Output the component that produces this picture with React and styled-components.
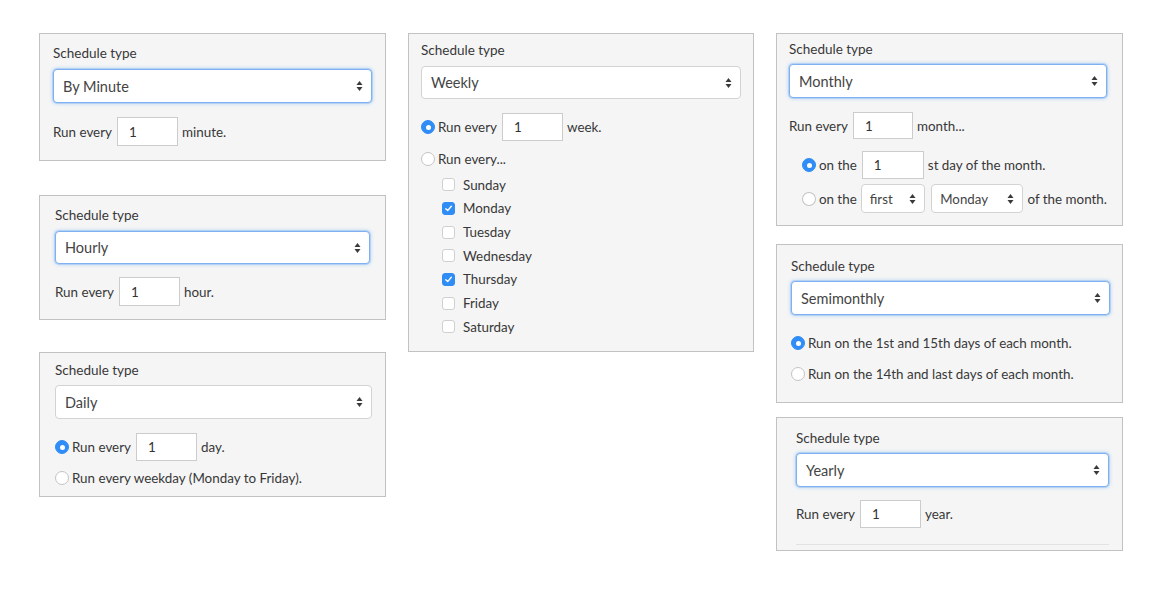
import styled, { createGlobalStyle } from "styled-components";

const GlobalStyle = createGlobalStyle`
  body {
    margin: 0;
    background: #ffffff;
    font-family: Lato, "Open Sans", sans-serif;
    color: #383838;
  }
`;

const Page = styled.div`
  display: flex;
  align-items: flex-start;
  gap: 22px;
  padding: 33px 0 0 39px;
`;

const Column = styled.div`
  display: flex;
  flex-direction: column;
  width: ${(p) => p.$w || 347}px;
`;

const Panel = styled.div`
  background: #f5f5f5;
  border: 1px solid #c2c2c2;
  margin-top: ${(p) => p.$mt || 0}px;
  padding: ${(p) => `${p.$pt}px ${p.$pr}px ${p.$pb}px ${p.$pl}px`};
`;

const Label = styled.div`
  font-size: 13.5px;
  line-height: 16px;
  color: #383838;
  margin-bottom: ${(p) => p.$mb}px;
`;

const SelectBox = styled.div`
  box-sizing: border-box;
  display: flex;
  align-items: center;
  justify-content: space-between;
  height: ${(p) => p.$h || 34}px;
  width: ${(p) => (p.$w ? `${p.$w}px` : "auto")};
  padding: 0 8px 0 ${(p) => (p.$small ? 8 : 9)}px;
  background: #fff;
  border: 1px solid ${(p) => (p.$focus ? "#7fb0ef" : "#d3d3d3")};
  border-radius: 4px;
  box-shadow: ${(p) =>
    p.$focus ? "0 0 0 1px rgba(127,176,239,0.35), 0 0 4px rgba(59,153,252,0.45)" : "none"};
  font-size: ${(p) => (p.$small ? 13.3 : 14.5)}px;
  color: #444;
  margin: ${(p) => p.$margin || 0};
`;

const Row = styled.div`
  display: flex;
  align-items: center;
  height: ${(p) => p.$h}px;
  margin-top: ${(p) => p.$mt}px;
  padding-left: ${(p) => p.$indent || 0}px;
  font-size: 13.4px;
  color: #383838;
  white-space: nowrap;
`;

const NumberBox = styled.div`
  box-sizing: border-box;
  display: flex;
  align-items: center;
  width: ${(p) => p.$w || 61}px;
  height: 100%;
  padding-left: 11px;
  margin: 0 4px 0 5px;
  background: #fff;
  border: 1px solid #cccccc;
  font-size: 13.4px;
  color: #333;
`;

const Radio = styled.span`
  box-sizing: border-box;
  display: inline-flex;
  align-items: center;
  justify-content: center;
  width: 14px;
  height: 14px;
  margin-right: 3px;
  border-radius: 50%;
  background: ${(p) => (p.$on ? "#2f8df5" : "#fff")};
  border: 1px solid ${(p) => (p.$on ? "#2f8df5" : "#c4c4c4")};

  &::after {
    content: "";
    display: ${(p) => (p.$on ? "block" : "none")};
    width: 5px;
    height: 5px;
    border-radius: 50%;
    background: #fff;
  }
`;

const DayList = styled.div`
  margin-top: 4px;
  padding-left: 21px;
`;

const DayRow = styled.div`
  display: flex;
  align-items: center;
  height: 23.67px;
  font-size: 13.4px;
  color: #383838;
`;

const Check = styled.span`
  box-sizing: border-box;
  display: inline-flex;
  align-items: center;
  justify-content: center;
  width: 13px;
  height: 13px;
  margin-right: 8px;
  border-radius: 3px;
  background: ${(p) => (p.$on ? "#2f8df5" : "#fff")};
  border: 1px solid ${(p) => (p.$on ? "#2f8df5" : "#d0d0d0")};
`;

const Divider = styled.div`
  height: 1px;
  margin-top: 16px;
  background: #e2e2e2;
`;

const Arrows = () => (
  <svg width="7" height="12" viewBox="0 0 7 12">
    <path d="M3.5 1 L6.5 5 L0.5 5 Z" fill="#3a3a3a" />
    <path d="M0.5 7 L6.5 7 L3.5 11 Z" fill="#3a3a3a" />
  </svg>
);

const Tick = () => (
  <svg width="9" height="9" viewBox="0 0 9 9">
    <path d="M1.8 4.8 L3.7 6.6 L7.3 2.3" fill="none" stroke="#fff" strokeWidth="1.4" strokeLinecap="round" strokeLinejoin="round" />
  </svg>
);

const Select = ({ value, ...rest }) => (
  <SelectBox {...rest}>
    <span>{value}</span>
    <Arrows />
  </SelectBox>
);

const days = [
  ["Sunday", false],
  ["Monday", true],
  ["Tuesday", false],
  ["Wednesday", false],
  ["Thursday", true],
  ["Friday", false],
  ["Saturday", false],
];

export default function App() {
  return (
    <>
      <GlobalStyle />
      <Page>
        <Column>
          <Panel $pt={11} $pr={13} $pb={14} $pl={13}>
            <Label $mb={8}>Schedule type</Label>
            <Select value="By Minute" $focus />
            <Row $h={29} $mt={14}>
              Run every <NumberBox>1</NumberBox> minute.
            </Row>
          </Panel>

          <Panel $mt={34} $pt={11} $pr={15} $pb={13} $pl={15}>
            <Label $mb={8}>Schedule type</Label>
            <Select value="Hourly" $h={33} $focus />
            <Row $h={29} $mt={13}>
              Run every <NumberBox>1</NumberBox> hour.
            </Row>
          </Panel>

          <Panel $mt={32} $pt={9} $pr={13} $pb={8} $pl={15}>
            <Label $mb={7}>Schedule type</Label>
            <Select value="Daily" />
            <Row $h={28} $mt={14}>
              <Radio $on />
              Run every <NumberBox>1</NumberBox> day.
            </Row>
            <Row $h={20} $mt={7}>
              <Radio />
              Run every weekday (Monday to Friday).
            </Row>
          </Panel>
        </Column>

        <Column $w={346}>
          <Panel $pt={8} $pr={12} $pb={12} $pl={12}>
            <Label $mb={8}>Schedule type</Label>
            <Select value="Weekly" $h={33} />
            <Row $h={28} $mt={14}>
              <Radio $on />
              Run every <NumberBox>1</NumberBox> week.
            </Row>
            <Row $h={20} $mt={8}>
              <Radio />
              Run every...
            </Row>
            <DayList>
              {days.map(([d, on]) => (
                <DayRow key={d}>
                  <Check $on={on}>{on && <Tick />}</Check>
                  {d}
                </DayRow>
              ))}
            </DayList>
          </Panel>
        </Column>

        <Column>
          <Panel $pt={7} $pr={15} $pb={12} $pl={12}>
            <Label $mb={7}>Schedule type</Label>
            <Select value="Monthly" $focus />
            <Row $h={27} $mt={14}>
              Run every <NumberBox $w={60}>1</NumberBox> month...
            </Row>
            <Row $h={28} $mt={12} $indent={13}>
              <Radio $on />
              on the <NumberBox $w={62}>1</NumberBox> st day of the month.
            </Row>
            <Row $h={29} $mt={5} $indent={13}>
              <Radio />
              on the
              <Select value="first" $small $w={65} $h={29} $margin="0 6px 0 4px" />
              <Select value="Monday" $small $w={93} $h={29} $margin="0 4px 0 0" />
              of the month.
            </Row>
          </Panel>

          <Panel $mt={18} $pt={13} $pr={12} $pb={18} $pl={14}>
            <Label $mb={7}>Schedule type</Label>
            <Select value="Semimonthly" $focus />
            <Row $h={20} $mt={18}>
              <Radio $on />
              Run on the 1st and 15th days of each month.
            </Row>
            <Row $h={20} $mt={11}>
              <Radio />
              Run on the 14th and last days of each month.
            </Row>
          </Panel>

          <Panel $mt={14} $pt={12} $pr={13} $pb={5} $pl={19}>
            <Label $mb={7}>Schedule type</Label>
            <Select value="Yearly" $focus />
            <Row $h={28} $mt={13}>
              Run every <NumberBox>1</NumberBox> year.
            </Row>
            <Divider />
          </Panel>
        </Column>
      </Page>
    </>
  );
}
